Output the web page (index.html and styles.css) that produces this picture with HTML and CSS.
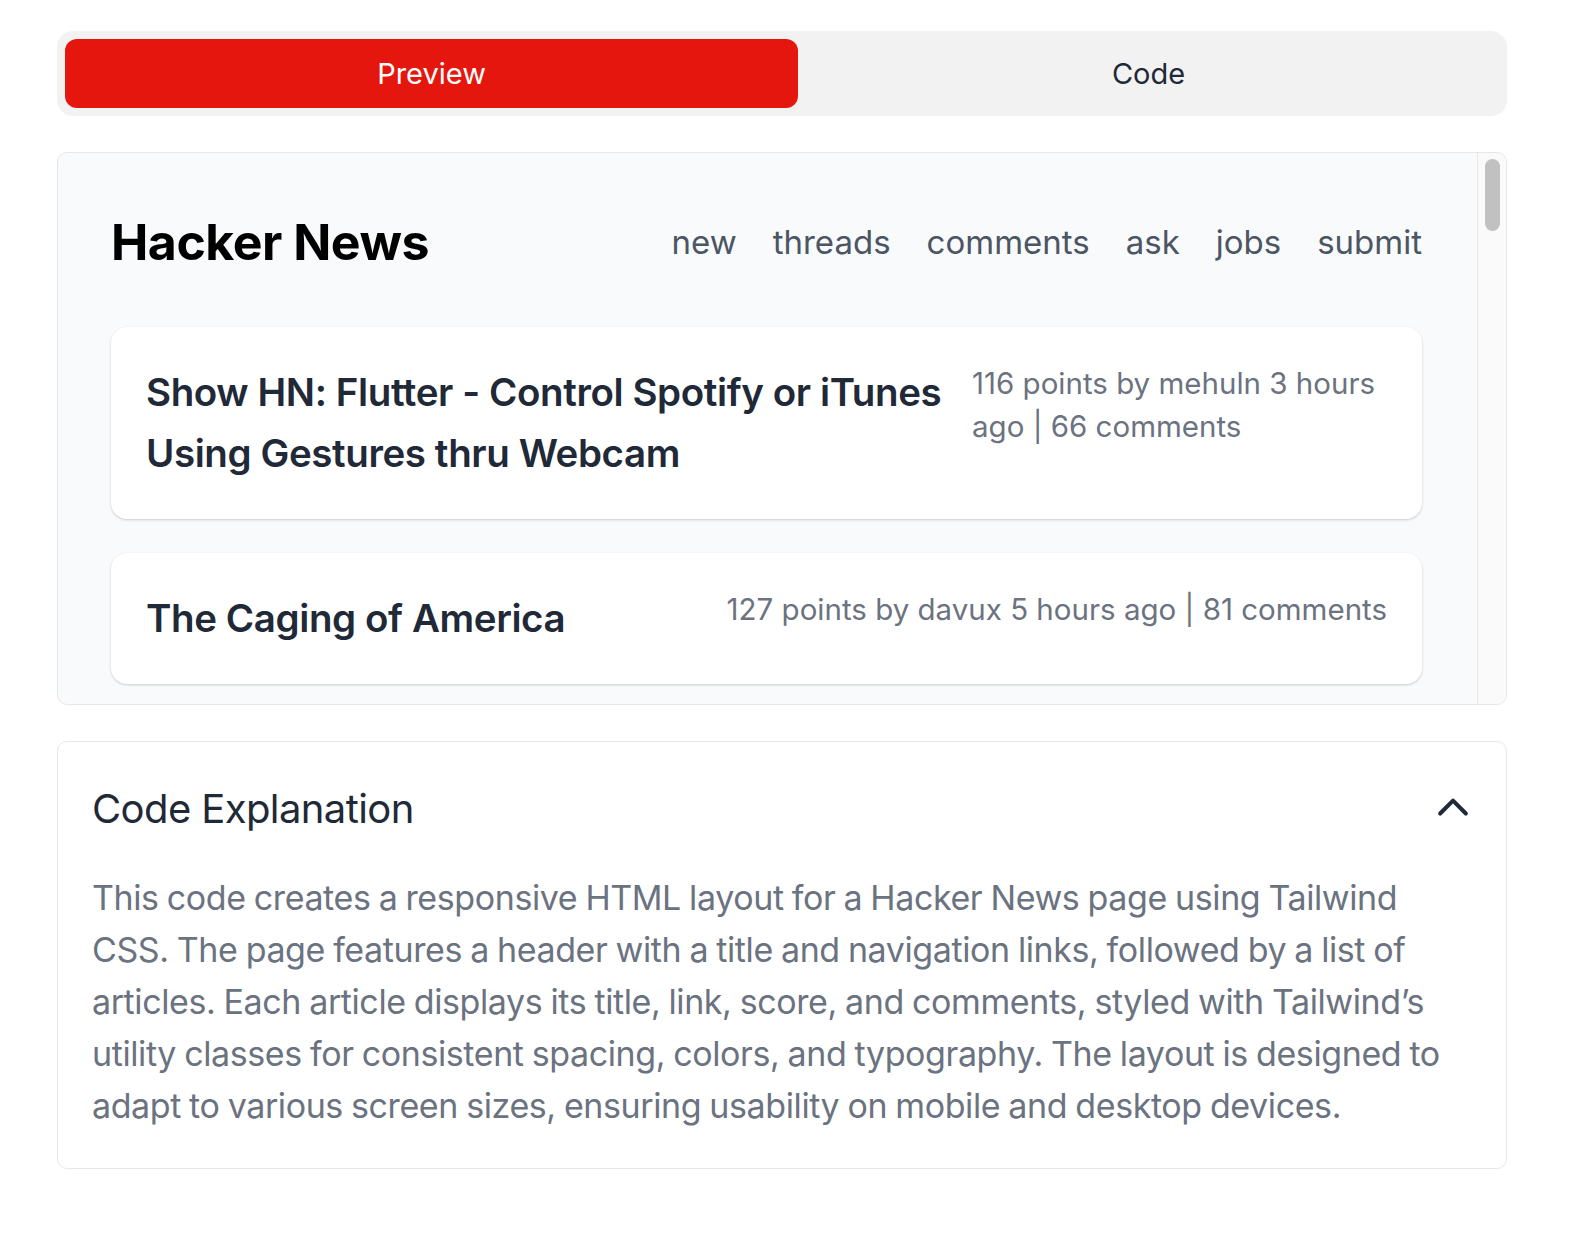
FILE: index.html
```html
<!DOCTYPE html>
<html lang="en">
<head>
    <meta charset="UTF-8">
    <meta name="viewport" content="width=device-width, initial-scale=1.0">
    <title>Hacker News - Preview</title>
    <link rel="stylesheet" href="styles.css">
</head>
<body>
    <div class="page">
        <div class="tabs">
            <span class="tab active">Preview</span>
            <span class="tab">Code</span>
        </div>

        <div class="preview">
            <div class="preview-body">
                <div class="hn-header">
                    <h1 class="hn-title">Hacker News</h1>
                    <nav class="hn-nav">
                        <a href="#">new</a>
                        <a href="#">threads</a>
                        <a href="#">comments</a>
                        <a href="#">ask</a>
                        <a href="#">jobs</a>
                        <a href="#">submit</a>
                    </nav>
                </div>
                <div class="stories">
                    <div class="story">
                        <a class="story-title" href="#">Show HN: Flutter - Control Spotify or iTunes Using Gestures thru Webcam</a>
                        <div class="story-meta">116 points by mehuln 3 hours ago | 66 comments</div>
                    </div>
                    <div class="story">
                        <a class="story-title" href="#">The Caging of America</a>
                        <div class="story-meta">127 points by davux 5 hours ago | 81 comments</div>
                    </div>
                </div>
            </div>
            <div class="scrollbar">
                <div class="scroll-thumb"></div>
            </div>
        </div>

        <div class="explain">
            <div class="explain-head">
                <h2>Code Explanation</h2>
                <svg class="chevron" viewBox="0 0 24 24" fill="none" stroke="currentColor" stroke-width="2.2" stroke-linecap="round" stroke-linejoin="round">
                    <path d="M5 15l7-7 7 7"/>
                </svg>
            </div>
            <p class="explain-text">This code creates a responsive HTML layout for a Hacker News page using Tailwind CSS. The page features a header with a title and navigation links, followed by a list of articles. Each article displays its title, link, score, and comments, styled with Tailwind’s utility classes for consistent spacing, colors, and typography. The layout is designed to adapt to various screen sizes, ensuring usability on mobile and desktop devices.</p>
        </div>
    </div>
</body>
</html>
```

FILE: styles.css
```css
body {
    margin: 0;
    background-color: white;
    font-family: Inter, "Noto Sans", sans-serif;
}
.page {
    width: 1450px;
    padding: 31px 0 0 57px;
}
.tabs {
    display: flex;
    padding: 8px;
    background-color: #f2f2f2;
    border-radius: 16px;
}
.tab {
    flex: 1;
    height: 69px;
    line-height: 69px;
    text-align: center;
    font-size: 29px;
    color: #1f2937;
    border-radius: 12px;
    cursor: pointer;
}
.tab.active {
    flex: 0 0 733px;
    background-color: #e5160e;
    color: white;
}
.preview {
    display: flex;
    margin-top: 36px;
    height: 553px;
    box-sizing: border-box;
    border: 1px solid #e5e7eb;
    border-radius: 10px;
    background-color: #f9fafb;
    overflow: hidden;
}
.preview-body {
    flex: 1;
    overflow-y: auto;
    scrollbar-width: none;
    padding: 53px 55px 53px 53px;
}
.scrollbar {
    width: 28px;
    border-left: 1px solid #e8e8e8;
    background-color: #fafafa;
}
.scroll-thumb {
    height: 72px;
    margin: 6px 6px 0 7px;
    border-radius: 8px;
    background-color: #c1c1c1;
}
.hn-header {
    display: flex;
    justify-content: space-between;
    align-items: center;
    height: 72px;
    margin-bottom: 49px;
}
.hn-title {
    margin: 0;
    font-size: 50px;
    font-weight: 700;
    color: #000;
    letter-spacing: -0.5px;
}
.hn-nav {
    display: flex;
    gap: 36px;
}
.hn-nav a {
    font-size: 33px;
    color: #4b5563;
    text-decoration: none;
}
.stories {
    display: flex;
    flex-direction: column;
    gap: 34px;
}
.story {
    display: flex;
    justify-content: space-between;
    align-items: flex-start;
    gap: 10px;
    padding: 35px;
    background-color: white;
    border-radius: 16px;
    box-shadow: 0 1px 3px rgba(0,0,0,0.12), 0 1px 2px rgba(0,0,0,0.08);
}
.story-title {
    font-size: 38.5px;
    line-height: 61px;
    font-weight: 600;
    color: #1f2937;
    text-decoration: none;
    letter-spacing: -0.4px;
}
.story-meta {
    font-size: 29.5px;
    line-height: 43px;
    color: #6b7280;
}
.explain {
    margin-top: 36px;
    border: 1px solid #e5e7eb;
    border-radius: 10px;
    padding: 34px 28px 36px 34px;
}
.explain-head {
    display: flex;
    justify-content: space-between;
    align-items: center;
    height: 64px;
    margin-bottom: 32px;
}
.explain-head h2 {
    margin: 0;
    font-size: 40px;
    font-weight: 400;
    color: #1f2937;
    letter-spacing: -0.6px;
}
.chevron {
    width: 44px;
    height: 44px;
    margin-right: 3px;
    color: #1f2937;
}
.explain-text {
    margin: 0;
    font-size: 34px;
    line-height: 52px;
    color: #6b7280;
    letter-spacing: -0.4px;
    word-spacing: -1px;
}
```
